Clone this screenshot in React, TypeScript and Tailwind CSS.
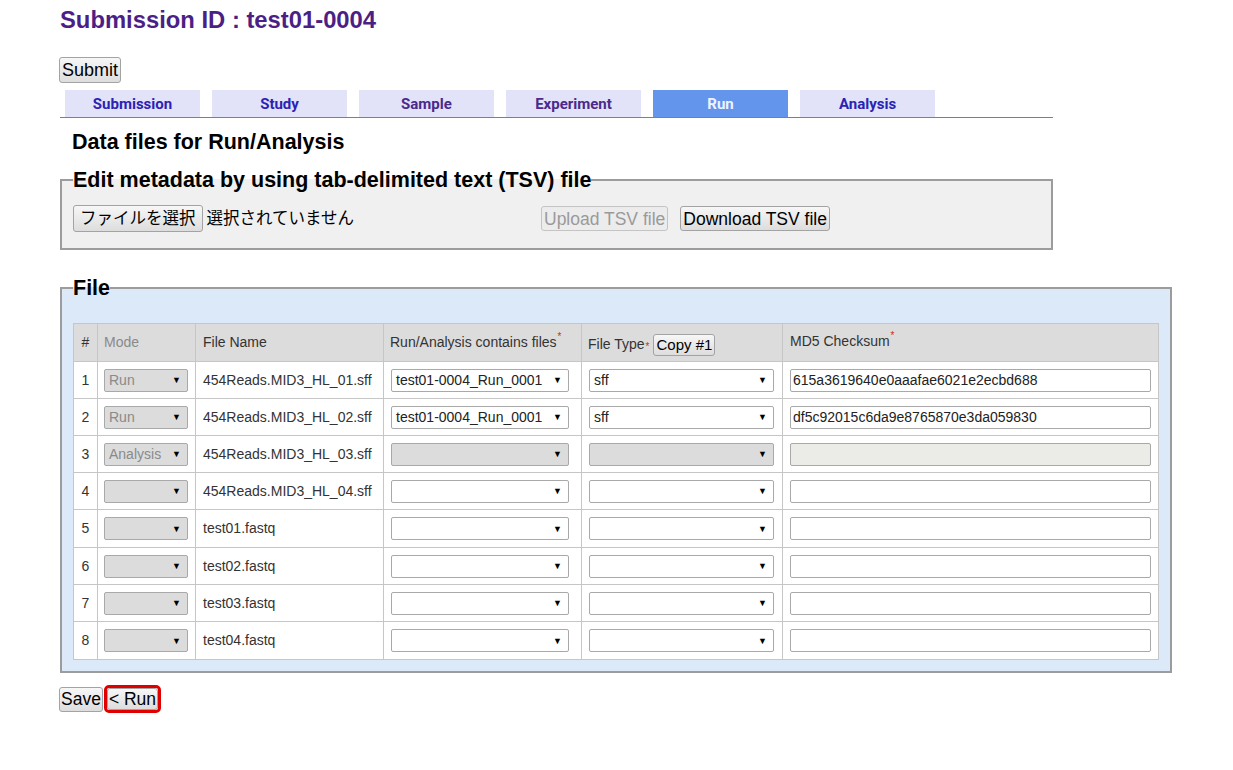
const btn =
  'rounded-[3px] border border-[#a3a3a3] bg-linear-to-b from-[#f7f7f7] to-[#dddddd] text-black';

type Row = {
  mode: string;
  name: string;
  run: string;
  type: string;
  md5: string;
  locked?: boolean;
  h: string;
};

const rows: Row[] = [
  { mode: 'Run', name: '454Reads.MID3_HL_01.sff', run: 'test01-0004_Run_0001', type: 'sff', md5: '615a3619640e0aaafae6021e2ecbd688', h: 'h-[37px]' },
  { mode: 'Run', name: '454Reads.MID3_HL_02.sff', run: 'test01-0004_Run_0001', type: 'sff', md5: 'df5c92015c6da9e8765870e3da059830', h: 'h-[37px]' },
  { mode: 'Analysis', name: '454Reads.MID3_HL_03.sff', run: '', type: '', md5: '', locked: true, h: 'h-[37px]' },
  { mode: '', name: '454Reads.MID3_HL_04.sff', run: '', type: '', md5: '', h: 'h-[37px]' },
  { mode: '', name: 'test01.fastq', run: '', type: '', md5: '', h: 'h-[38px]' },
  { mode: '', name: 'test02.fastq', run: '', type: '', md5: '', h: 'h-[37px]' },
  { mode: '', name: 'test03.fastq', run: '', type: '', md5: '', h: 'h-[37px]' },
  { mode: '', name: 'test04.fastq', run: '', type: '', md5: '', h: 'h-[38px]' },
];

const tabs = [
  { label: 'Submission', color: 'text-[#2b22b4]' },
  { label: 'Study', color: 'text-[#2b22b4]' },
  { label: 'Sample', color: 'text-[#4a2a8c]' },
  { label: 'Experiment', color: 'text-[#4a2a8c]' },
  { label: 'Run', active: true, color: 'text-[#eef3ff]' },
  { label: 'Analysis', color: 'text-[#2b22b4]' },
];

function Sel({ value, disabled, muted, className }: { value: string; disabled?: boolean; muted?: boolean; className: string }) {
  return (
    <div
      className={`flex h-[23px] items-center justify-between rounded-[2px] border border-[#a9a9a9] pl-[4px] pr-[6px] text-[14px] leading-[16px] ${
        disabled ? 'bg-[#dcdcdc]' : 'bg-white'
      } ${muted ? 'text-[#8a8a8a]' : 'text-[#222]'} ${className}`}
    >
      <span>{value}</span>
      <span className="text-[9px] text-black">▼</span>
    </div>
  );
}

function Star() {
  return <span className="ml-[1px] self-start text-[10px] leading-[10px] text-[#e02020]">*</span>;
}

export default function App() {
  return (
    <div className="min-h-[770px] bg-white font-['Liberation_Sans',Arial,sans-serif] text-black">
      <h1 className="ml-[60px] pt-[6px] text-[23.8px] font-bold leading-[28px] text-[#4b1f85]">Submission ID : test01-0004</h1>

      <div className="ml-[59px] mt-[23px]">
        <button className={`${btn} px-[2px] py-[1px] text-[18px] leading-[22px]`}>Submit</button>
      </div>

      {/* tabs */}
      <div className="ml-[60px] mt-[7px] flex w-[993px] gap-[12px] border-b border-[#7f7f7f] pl-[5px] font-['Roboto',sans-serif]">
        {tabs.map((t) => (
          <div
            key={t.label}
            className={`flex h-[27px] w-[135px] items-center justify-center pt-[2px] text-[15px] font-bold ${t.color} ${
              t.active ? 'bg-[#6495ed]' : 'bg-[#e2e2f8]'
            }`}
          >
            {t.label}
          </div>
        ))}
      </div>

      <h2 className="ml-[72px] mt-[12px] text-[21.5px] font-bold leading-[24px]">Data files for Run/Analysis</h2>

      {/* TSV */}
      <fieldset className="ml-[60px] mt-[14px] w-[993px] border-2 border-[#9c9c9c] bg-[#f0f0f0] pb-[16px] pl-[11px] pt-[13px]">
        <legend className="text-[21.5px] font-bold leading-[24px]">Edit metadata by using tab-delimited text (TSV) file</legend>
        <div className="flex items-center">
          <div className="flex w-[468px] items-center font-['Liberation_Sans','Noto_Sans_CJK_JP',sans-serif]">
            <button className={`${btn} h-[27px] px-[6px] text-[16.5px] leading-[23px]`}>ファイルを選択</button>
            <span className="ml-[4px] text-[16.5px] leading-[23px]">選択されていません</span>
          </div>
          <button className="h-[25px] rounded-[3px] border border-[#c4c4c4] bg-[#ececec] px-[2px] text-[17.5px] leading-[22px] text-[#9a9a9a]">
            Upload TSV file
          </button>
          <button className={`${btn} ml-[12px] h-[25px] px-[2px] text-[17.5px] leading-[22px]`}>Download TSV file</button>
        </div>
      </fieldset>

      {/* File */}
      <fieldset className="ml-[60px] mt-[26px] w-[1111px] border-2 border-[#9c9c9c] bg-[#dbe9f8] px-[11px] pb-[11px] pt-[23px]">
        <legend className="text-[21.5px] font-bold leading-[24px]">File</legend>
        <table className="w-[1085px] table-fixed border-collapse text-[14px] text-[#333]">
          <colgroup>
            <col className="w-[24px]" />
            <col className="w-[98px]" />
            <col className="w-[188px]" />
            <col className="w-[198px]" />
            <col className="w-[201px]" />
            <col className="w-[376px]" />
          </colgroup>
          <thead>
            <tr className="h-[38px] bg-[#dcdcdc] text-left align-middle">
              <th className="border border-[#c6c6c6] text-center font-normal text-[#333]">#</th>
              <th className="border border-[#c6c6c6] pl-[6px] font-normal text-[#8a8a8a]">Mode</th>
              <th className="border border-[#c6c6c6] pl-[7px] font-normal">File Name</th>
              <th className="border border-[#c6c6c6] pl-[6px] font-normal">
                <div className="flex items-center">
                  <span>Run/Analysis contains files</span>
                  <Star />
                </div>
              </th>
              <th className="border border-[#c6c6c6] pl-[6px] font-normal">
                <div className="flex items-center pt-[4px]">
                  <span>File Type</span>
                  <span className="mt-[2px] self-start">
                    <Star />
                  </span>
                  <button className={`${btn} ml-[4px] px-[2px] text-[15px] leading-[20px]`}>Copy #1</button>
                </div>
              </th>
              <th className="border border-[#c6c6c6] pb-[3px] pl-[7px] font-normal">
                <div className="flex items-center">
                  <span>MD5 Checksum</span>
                  <Star />
                </div>
              </th>
            </tr>
          </thead>
          <tbody>
            {rows.map((r, i) => (
              <tr key={r.name} className={`${r.h} bg-white`}>
                <td className="border border-[#c6c6c6] text-center">{i + 1}</td>
                <td className="border border-[#c6c6c6] pl-[6px]">
                  <Sel value={r.mode} disabled muted className="w-[84px]" />
                </td>
                <td className="border border-[#c6c6c6] pl-[7px]">{r.name}</td>
                <td className="border border-[#c6c6c6] pl-[7px]">
                  <Sel value={r.run} disabled={r.locked} className="w-[178px]" />
                </td>
                <td className="border border-[#c6c6c6] pl-[7px]">
                  <Sel value={r.type} disabled={r.locked} className="w-[185px]" />
                </td>
                <td className="border border-[#c6c6c6] pl-[7px]">
                  <div
                    className={`flex h-[23px] w-[361px] items-center rounded-[2px] border border-[#a9a9a9] pl-[2px] text-[14px] text-[#222] ${
                      r.locked ? 'bg-[#ebebe8]' : 'bg-white'
                    }`}
                  >
                    {r.md5}
                  </div>
                </td>
              </tr>
            ))}
          </tbody>
        </table>
      </fieldset>

      <div className="ml-[59px] mt-[12px] flex items-center">
        <button className={`${btn} h-[25px] px-[1px] text-[17.5px] leading-[22px]`}>Save</button>
        <span className="ml-[1px] rounded-[5px] border-[3px] border-[#e00000]">
          <button className={`${btn} block h-[22px] px-[1px] text-[17.5px] leading-[20px]`}>&lt; Run</button>
        </span>
      </div>
    </div>
  );
}
